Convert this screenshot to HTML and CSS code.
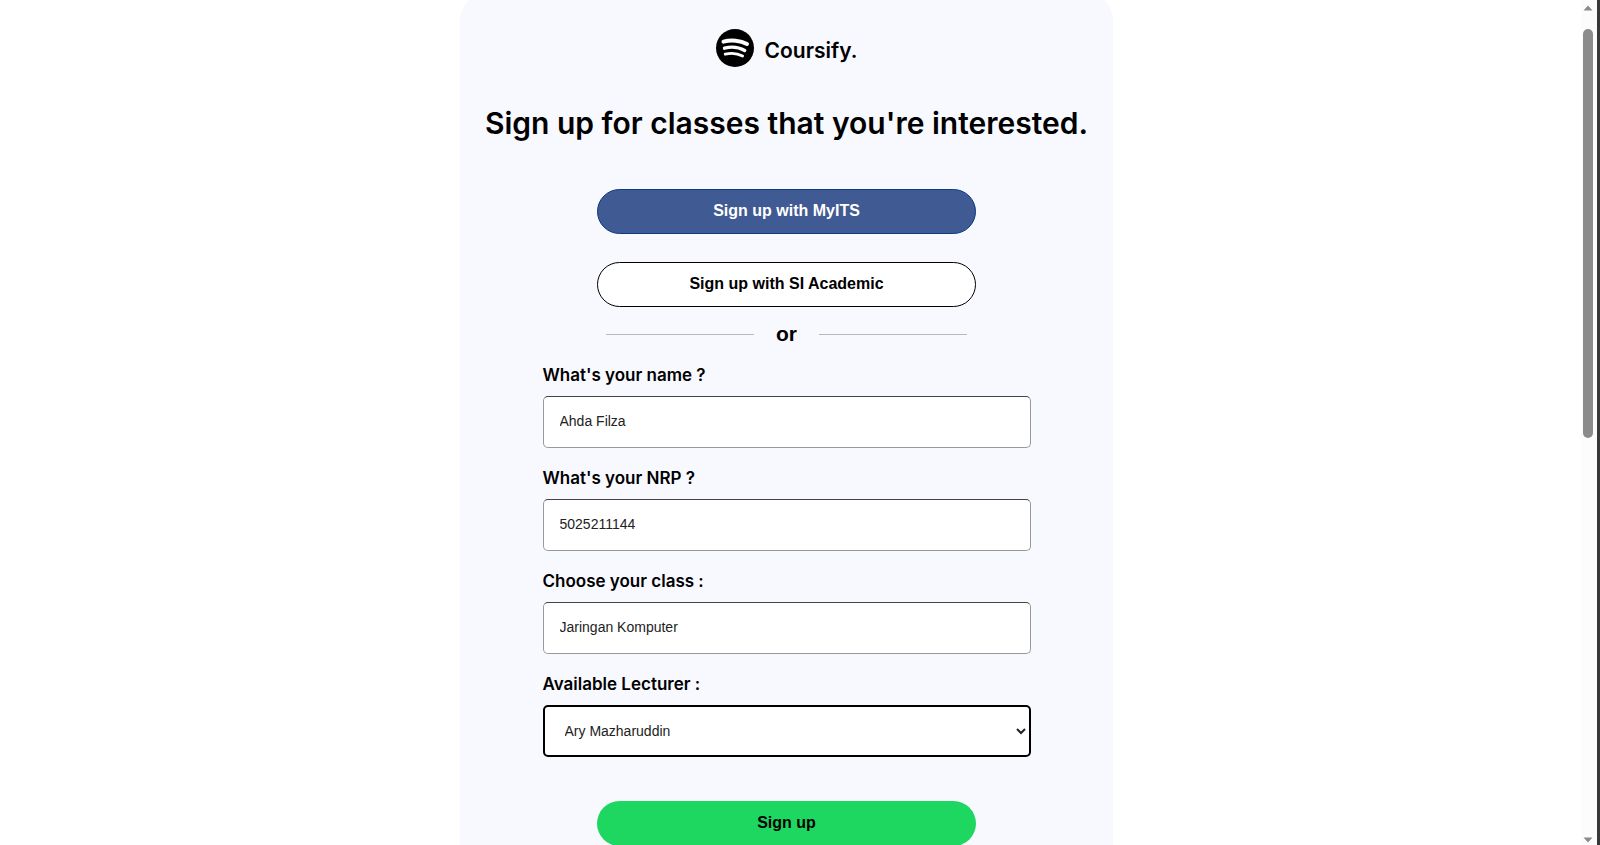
FILE: index.html
```html
<!DOCTYPE html>
<html lang="en">
<head>
    <meta charset="UTF-8">
    <meta name="viewport" content="width=device-width, initial-scale=1.0">
    <title>Coursify - Sign up</title>
    <link rel="stylesheet" href="styles.css">
</head>
<body>
    <main class="page">
        <section class="card">
            <div class="logo">
                <svg class="logo-icon" viewBox="0 0 38 38" aria-hidden="true">
                    <circle cx="19" cy="19" r="19" fill="#000"/>
                    <g fill="none" stroke="#fff" stroke-linecap="round">
                        <path d="M7.5 12.7C15 10.5 24.5 11.3 31 15" stroke-width="4"/>
                        <path d="M8.5 19.2C15.5 17.3 23 18.2 28.7 21.4" stroke-width="3.4"/>
                        <path d="M9.2 25.2C15.5 23.6 21.5 24.3 26.6 27" stroke-width="2.8"/>
                    </g>
                </svg>
                <span class="logo-name">Coursify.</span>
            </div>

            <h1>Sign up for classes that you're interested.</h1>

            <div class="social">
                <button type="button" class="btn btn-myits">Sign up with MyITS</button>
                <button type="button" class="btn btn-academic">Sign up with SI Academic</button>
            </div>

            <div class="divider">
                <hr>
                <span>or</span>
                <hr>
            </div>

            <form class="signup-form">
                <div class="form-group">
                    <label for="name">What's your name ?</label>
                    <input type="text" id="name" name="name" value="Ahda Filza">
                </div>
                <div class="form-group">
                    <label for="nrp">What's your NRP ?</label>
                    <input type="text" id="nrp" name="nrp" value="5025211144">
                </div>
                <div class="form-group">
                    <label for="class">Choose your class :</label>
                    <input type="text" id="class" name="class" value="Jaringan Komputer">
                </div>
                <div class="form-group">
                    <label for="lecturer">Available Lecturer :</label>
                    <select id="lecturer" name="lecturer">
                        <option>Ary Mazharuddin</option>
                    </select>
                </div>
                <button type="submit" class="btn btn-signup">Sign up</button>
            </form>
        </section>
    </main>

    <!-- Scrollbar -->
    <div class="scrollbar" aria-hidden="true">
        <svg class="arrow" viewBox="0 0 10 6"><path d="M5 0.5L9.5 5.5H0.5Z" fill="#8b8b8b"/></svg>
        <div class="track"><div class="thumb"></div></div>
        <svg class="arrow" viewBox="0 0 10 6"><path d="M5 5.5L9.5 0.5H0.5Z" fill="#8b8b8b"/></svg>
    </div>
</body>
</html>
```
FILE: styles.css
```css
* {
    box-sizing: border-box;
}

body {
    display: flex;
    height: 100vh;
    margin: 0;
    overflow: hidden;
    background-color: #fff;
    color: #000;
    font-family: "Liberation Sans", Arial, sans-serif;
}

/* Card */
.page {
    flex: 1;
    padding-right: 8px;
    overflow: hidden;
}

.card {
    display: flex;
    flex-direction: column;
    align-items: center;
    width: 100%;
    max-width: 653px;
    margin: -8px auto 0;
    padding: 37px 20px 40px;
    border-radius: 28px;
    background-color: #f8f9ff;
}

.logo {
    display: flex;
    align-items: center;
    gap: 11px;
}

.logo-icon {
    width: 38px;
    height: 38px;
}

.logo-name {
    padding-top: 4px;
    font-family: Inter, sans-serif;
    font-size: 21px;
    font-weight: 600;
}

h1 {
    margin: 36px 0 46px;
    font-family: Inter, sans-serif;
    font-size: 30px;
    line-height: 40px;
    font-weight: 600;
    text-align: center;
}

/* Buttons */
.social {
    display: flex;
    flex-direction: column;
    align-items: center;
    gap: 28px;
    width: 100%;
}

.btn {
    width: 100%;
    max-width: 379px;
    height: 45px;
    padding: 0 6px 2px;
    border-radius: 23px;
    font-family: inherit;
    font-size: 16px;
    font-weight: 700;
    cursor: pointer;
}

.btn-myits {
    border: 1px solid #0b3b80;
    background-color: #405a93;
    color: #fff;
}

.btn-academic {
    border: 1px solid #000;
    background-color: #fff;
    color: #000;
}

.btn-signup {
    margin-top: 26px;
    border: none;
    background-color: #1ed760;
    color: #000;
}

/* Divider */
.divider {
    display: flex;
    align-items: center;
    gap: 22px;
    width: 100%;
    max-width: 361px;
    margin: 14px 0 16px;
    font-size: 21px;
    line-height: 26px;
    font-weight: 700;
}

.divider hr {
    flex: 1;
    margin: 0;
    border: none;
    border-top: 1px solid #b8b8bc;
}

/* Form */
.signup-form {
    display: flex;
    flex-direction: column;
    align-items: center;
    gap: 18px;
    width: 100%;
    max-width: 488px;
}

.form-group {
    display: flex;
    flex-direction: column;
    gap: 9px;
    width: 100%;
}

label {
    font-family: Inter, sans-serif;
    font-size: 17px;
    line-height: 24px;
    font-weight: 600;
}

input,
select {
    width: 100%;
    height: 52px;
    padding: 0 16px 2px;
    border: 1px solid #999;
    border-top-color: #444;
    border-radius: 5px;
    background-color: #fff;
    color: #222;
    font-family: inherit;
    font-size: 14px;
}

select {
    padding: 0 0 0 16px;
    border: 2px solid #000;
}

/* Scrollbar */
.scrollbar {
    display: flex;
    flex-direction: column;
    align-items: center;
    width: 19px;
    padding: 5px 2px 2px 0;
    border-right: 3px solid #373937;
    background-color: #fcfcfc;
}

.arrow {
    width: 10px;
    height: 6px;
}

.track {
    flex: 1;
    padding: 18px 0 22px;
}

.thumb {
    width: 10px;
    height: 52%;
    border-radius: 5px;
    background-color: #8b8b8b;
}
```
